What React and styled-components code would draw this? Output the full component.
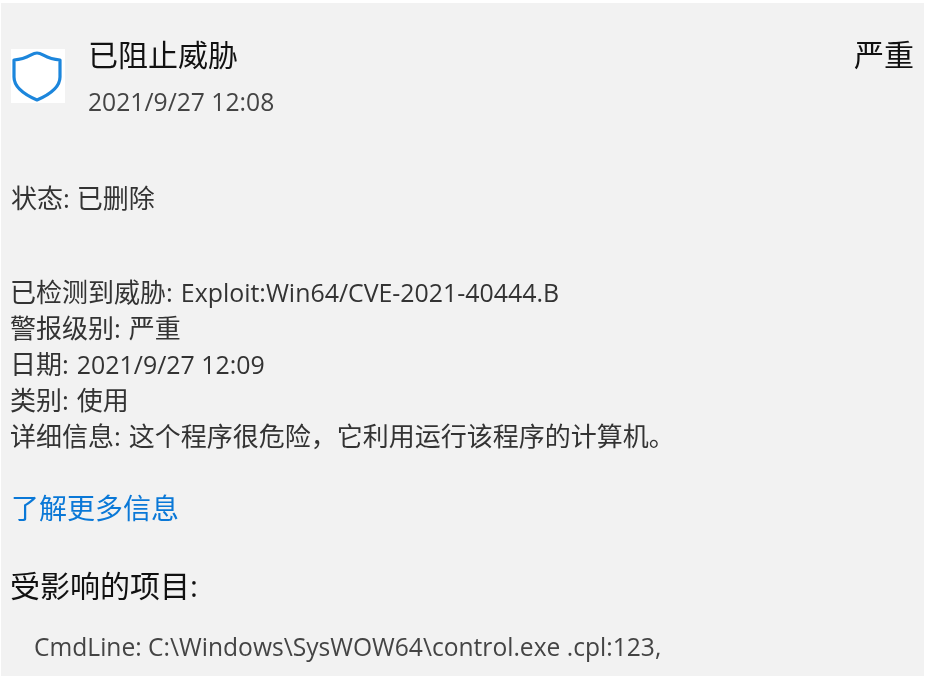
import styled, { createGlobalStyle } from 'styled-components';

const GlobalStyle = createGlobalStyle`
    html, body {
        margin: 0;
        padding: 0;
        background: #ffffff;
    }
    body {
        font-family: "Open Sans", "Noto Sans CJK SC", sans-serif;
    }
`;

const Panel = styled.div`
    width: 923px;
    height: 673px;
    margin: 3px 0 0 1px;
    background: #f2f2f2;
    color: #333333;
    overflow: hidden;
    box-sizing: border-box;
    padding: 0 10px 0 9px;
    filter: blur(0.45px);
`;

const Header = styled.header`
    display: flex;
    align-items: flex-start;
    padding-top: 30px;
`;

const IconBox = styled.div`
    width: 54px;
    height: 54px;
    margin: 16px 23px 0 1px;
    background: #ffffff;
    display: flex;
    align-items: center;
    justify-content: center;
    flex-shrink: 0;
`;

const HeaderText = styled.div`
    flex: 1;
`;

const Title = styled.div`
    font-size: 30px;
    line-height: 44px;
    color: #111111;
`;

const Stamp = styled.div`
    font-size: 24.7px;
    line-height: 32px;
    margin-top: 9px;
    color: #444444;
`;

const Severity = styled.div`
    font-size: 30px;
    line-height: 44px;
    color: #111111;
`;

const Status = styled.div`
    font-size: 26px;
    line-height: 36px;
    margin-top: 62px;
    margin-left: 1px;
`;

const Details = styled.div`
    margin-top: 58px;
`;

const Row = styled.div`
    font-size: 26px;
    line-height: 36px;
`;

const Label = styled.span`
    margin-right: ${props => props.$gap || 8}px;
`;

const Latin = styled.span`
    font-size: 24.9px;
`;

const MoreLink = styled.a`
    display: block;
    font-size: 28px;
    line-height: 40px;
    margin-top: 34px;
    margin-left: 1px;
    color: #0a78d7;
    text-decoration: none;
`;

const Section = styled.div`
    font-size: 30px;
    line-height: 40px;
    margin-top: 38px;
    color: #111111;
`;

const Item = styled.div`
    font-size: 24.6px;
    line-height: 36px;
    margin-top: 23px;
    margin-left: 24px;
    color: #444444;
    white-space: nowrap;
`;

const ShieldIcon = () => (
    <svg width="54" height="54" viewBox="0 0 54 54" fill="none">
        <path
            d="M26 4 C32 4 34 10 49 11 V28 C49 38 40 45 26 51 C12 45 3 38 3 28 V11 C18 10 20 4 26 4 Z"
            stroke="#1c86dc"
            strokeWidth="3.2"
            strokeLinejoin="round"
        />
    </svg>
);

const rows = [
    ['已检测到威胁:', <Latin>Exploit:Win64/CVE-2021-40444.B</Latin>],
    ['警报级别:', '严重'],
    ['日期:', <Latin>2021/9/27 12:09</Latin>],
    ['类别:', '使用'],
    ['详细信息:', '这个程序很危险，它利用运行该程序的计算机。'],
];

export default function App() {
    return (
        <>
            <GlobalStyle />
            <Panel>
                <Header>
                    <IconBox>
                        <ShieldIcon />
                    </IconBox>
                    <HeaderText>
                        <Title>已阻止威胁</Title>
                        <Stamp>2021/9/27 12:08</Stamp>
                    </HeaderText>
                    <Severity>严重</Severity>
                </Header>
                <Status>
                    <Label $gap={7}>状态:</Label>已删除
                </Status>
                <Details>
                    {rows.map(([label, value]) => (
                        <Row key={label}>
                            <Label>{label}</Label>
                            {value}
                        </Row>
                    ))}
                </Details>
                <MoreLink href="#">了解更多信息</MoreLink>
                <Section>受影响的项目:</Section>
                <Item>CmdLine: C:\Windows\SysWOW64\control.exe .cpl:123,</Item>
            </Panel>
        </>
    );
}
